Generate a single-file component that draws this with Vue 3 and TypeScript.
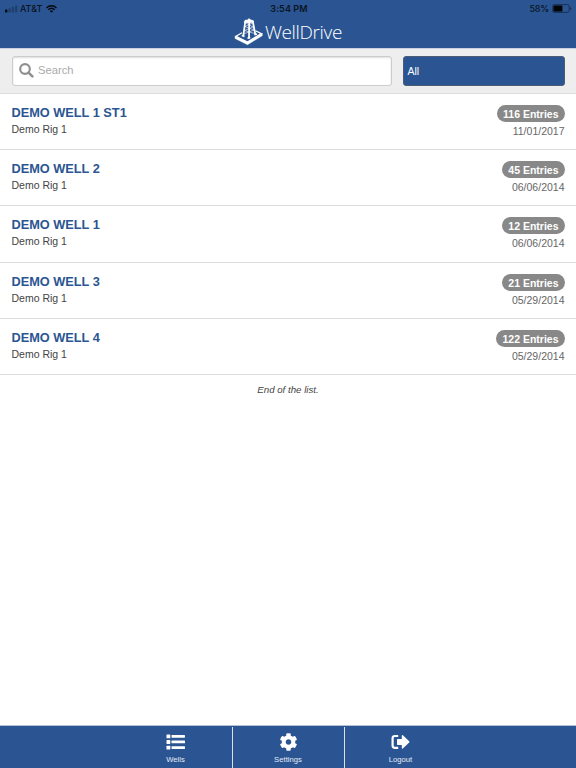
<script setup lang="ts">
import { ref } from 'vue'

interface Well {
  name: string
  rig: string
  entries: number
  date: string
}

const query = ref('')
const wells: Well[] = [
  { name: 'DEMO WELL 1 ST1', rig: 'Demo Rig 1', entries: 116, date: '11/01/2017' },
  { name: 'DEMO WELL 2', rig: 'Demo Rig 1', entries: 45, date: '06/06/2014' },
  { name: 'DEMO WELL 1', rig: 'Demo Rig 1', entries: 12, date: '06/06/2014' },
  { name: 'DEMO WELL 3', rig: 'Demo Rig 1', entries: 21, date: '05/29/2014' },
  { name: 'DEMO WELL 4', rig: 'Demo Rig 1', entries: 122, date: '05/29/2014' },
]
</script>

<template>
  <div class="app">
    <header class="header">
      <div class="status">
        <div class="carrier">
          <svg class="signal" width="13" height="8" viewBox="0 0 13 8">
            <rect x="0" y="4.4" width="2.4" height="3" rx=".6" fill="#05080f" />
            <rect x="3.4" y="3.2" width="2.3" height="4.2" rx=".6" fill="#1f3f70" />
            <rect x="6.7" y="1.8" width="2.3" height="5.6" rx=".6" fill="#1f3f70" />
            <rect x="10" y="0.4" width="2.3" height="7" rx=".6" fill="#1f3f70" />
          </svg>
          <span class="carrier-name">AT&amp;T</span>
          <svg class="wifi" width="11" height="8" viewBox="0 0 11 8" fill="none" stroke="#05080f" stroke-width="1.4">
            <path d="M.5 2.9C3.4.1 7.6.1 10.500 2.900" />
            <path d="M2.300 4.800C4.200 3 6.800 3 8.700 4.800" />
            <path d="M3.700 5.900Q5.500 4.400 7.300 5.900L5.500 7.800Z" fill="#05080f" stroke="none" />
          </svg>
        </div>
        <div class="time">3:54 PM</div>
        <div class="power">
          <span>58%</span>
          <svg width="20" height="9" viewBox="0 0 20 9">
            <rect x=".6" y=".6" width="16.600" height="7.800" rx="1.800" fill="none" stroke="#142b50" stroke-width=".9" />
            <rect x="1.500" y="1.500" width="8.900" height="6" rx=".6" fill="#020305" />
            <path d="M18.200 3v3q1.200-.5 1.200-1.500t-1.200-1.500z" fill="#142b50" />
          </svg>
        </div>
      </div>
      <div class="brand">
        <svg class="logo" width="30" height="28" viewBox="0 0 30 28" fill="none" stroke="#fff">
          <path d="M8 14.800L2 18.200L13.500 24L27.300 15.600L21.500 12.800" stroke-width="1.200" />
          <path d="M1 18L13.500 24L28.300 15.300V17.700L13.500 26.700L1 20.400Z" fill="#fff" stroke-width=".4" />
          <path d="M11.300 3L9.300 18M15.200 4L15 20.500M18.700 3L21.400 16.800" stroke-width="1.800" />
          <path d="M12 5L19 9L10.500 12.500L20.500 15.500M18.400 5L11 8.500L20 12L9.500 16" stroke-width=".6" />
          <path d="M7.800 17.500L10.500 18.500M13.500 20.200L16.300 19.600M20.500 16.800L23 16" stroke-width="1.500" />
          <path d="M10.300 3.500L11.300 1.900H13.300L15 .4L16.700 1.800L19.300 2.500L19.500 4.200L15.400 5L10.500 4.700Z" fill="#fff" stroke-width=".4" />
        </svg>
        <span class="brand-name">WellDrive</span>
      </div>
    </header>

    <div class="filters">
      <label class="search">
        <svg width="15" height="15" viewBox="0 0 14 14" fill="none" stroke="#8f8f8f">
          <circle cx="5.600" cy="5.600" r="4.500" stroke-width="2" />
          <path d="M8.900 8.900L12.500 12.500" stroke-width="2.300" stroke-linecap="round" />
        </svg>
        <input v-model="query" type="text" placeholder="Search" />
      </label>
      <button class="select" type="button">All</button>
    </div>

    <main class="content">
      <ul class="wells">
        <li v-for="well in wells" :key="well.name" class="well">
          <div class="title">
            <div class="name">{{ well.name }}</div>
            <div class="rig">{{ well.rig }}</div>
          </div>
          <div class="meta">
            <span class="badge">{{ well.entries }} Entries</span>
            <span class="date">{{ well.date }}</span>
          </div>
        </li>
      </ul>
      <p class="end">End of the list.</p>
    </main>

    <nav class="tabs">
      <a class="tab">
        <svg width="20" height="18" viewBox="0 0 20 18" fill="#fff">
          <rect x=".5" y="1.500" width="3.800" height="3.800" rx=".6" />
          <rect x=".5" y="7.100" width="3.800" height="3.800" rx=".6" />
          <rect x=".5" y="12.700" width="3.800" height="3.800" rx=".6" />
          <rect x="5.500" y="2" width="13.500" height="2.700" rx=".6" />
          <rect x="5.500" y="7.600" width="13.500" height="2.700" rx=".6" />
          <rect x="5.500" y="13.200" width="13.500" height="2.700" rx=".6" />
        </svg>
        <span>Wells</span>
      </a>
      <a class="tab">
        <svg width="19" height="18" viewBox="0 0 512 512" fill="#fff">
          <path d="M487.400 315.700l-42.600-24.600c4.300-23.200 4.300-47 0-70.200l42.600-24.600c4.900-2.800 7.100-8.600 5.500-14-11.100-35.600-30-67.800-54.700-94.600-3.800-4.100-10-5.100-14.800-2.300L380.800 110c-17.900-15.400-38.500-27.300-60.800-35.100V25.800c0-5.600-3.900-10.500-9.400-11.700-36.700-8.200-74.300-7.800-109.200 0-5.500 1.200-9.400 6.100-9.400 11.700V75c-22.200 7.900-42.800 19.800-60.800 35.100L88.700 85.500c-4.900-2.800-11-1.900-14.800 2.300-24.700 26.700-43.600 58.900-54.700 94.600-1.700 5.400.6 11.200 5.500 14L67.300 221c-4.300 23.200-4.300 47 0 70.200l-42.600 24.600c-4.900 2.800-7.100 8.600-5.500 14 11.100 35.600 30 67.800 54.700 94.600 3.800 4.100 10 5.100 14.800 2.300l42.600-24.600c17.900 15.400 38.500 27.300 60.800 35.100v49.200c0 5.600 3.900 10.500 9.400 11.700 36.700 8.200 74.300 7.800 109.200 0 5.500-1.200 9.400-6.100 9.400-11.700v-49.200c22.200-7.900 42.800-19.800 60.800-35.100l42.600 24.600c4.900 2.800 11 1.900 14.800-2.300 24.700-26.700 43.600-58.900 54.700-94.600 1.500-5.500-.7-11.300-5.600-14.100zM256 336c-44.100 0-80-35.900-80-80s35.900-80 80-80 80 35.900 80 80-35.900 80-80 80z" />
        </svg>
        <span>Settings</span>
      </a>
      <a class="tab">
        <svg width="20" height="18" viewBox="0.6 0 20 18">
          <path d="M7.800 3H4.500Q2.200 3 2.200 5.300V12.500Q2.200 14.800 4.500 14.800H7.800" fill="none" stroke="#fff" stroke-width="2.200" />
          <path d="M6.600 6.700Q6.600 6 7.300 6H11.400V2.800Q11.600 1.700 12.500 2.300L18.800 8.300Q19.300 8.900 18.800 9.500L12.500 15.600Q11.600 16.200 11.400 15.100V11.900H7.300Q6.600 11.900 6.600 11.200Z" fill="#fff" />
        </svg>
        <span>Logout</span>
      </a>
    </nav>
  </div>
</template>

<style>
body {
  margin: 0;
  background: #fff;
}
</style>

<style scoped>
.app {
  display: flex;
  flex-direction: column;
  height: 768px;
  font-family: "Liberation Sans", Arial, sans-serif;
  color: #444;
}
.header {
  box-sizing: border-box;
  height: 49px;
  background: #2b5592;
  border-bottom: 1px solid #c9cfe0;
}
.status {
  display: grid;
  grid-template-columns: 1fr auto 1fr;
  align-items: center;
  height: 16px;
  padding: 1px 5px 0 5px;
  box-sizing: border-box;
  font: 500 9px/14px Inter, sans-serif;
  color: #0a1322;
}
.carrier {
  display: flex;
  align-items: center;
}
.carrier-name {
  margin: 0 4px 0 2px;
}
.time {
  padding-left: 2px;
  font-weight: 600;
  letter-spacing: 0.1px;
}
.power {
  display: flex;
  align-items: center;
  justify-content: flex-end;
  gap: 3px;
  margin-right: -1px;
}
.power span {
  letter-spacing: -0.2px;
}
.brand {
  display: flex;
  justify-content: center;
  align-items: center;
  height: 31px;
}
.brand-name {
  font: 300 19px/30px "Open Sans", sans-serif;
  letter-spacing: -0.35px;
  color: #fff;
}
.logo {
  margin-right: 1px;
}
.filters {
  display: flex;
  gap: 11px;
  box-sizing: border-box;
  height: 45px;
  padding: 7px 11.500px 0 11.500px;
  background: #eee;
  border-bottom: 1px solid #ddd;
}
.search {
  box-sizing: border-box;
  display: flex;
  align-items: center;
  gap: 4.500px;
  width: 380px;
  height: 30px;
  padding: 0 6px 2px;
  background: #fff;
  border: 1px solid #ccc;
  border-radius: 3px;
  box-shadow: inset 0 1px 2px #ddd;
}
.search input {
  flex: 1;
  min-width: 0;
  padding: 0 0 1px;
  border: 0;
  outline: 0;
  background: transparent;
  font: 11.2px "Liberation Sans", sans-serif;
  color: #444;
}
.search input::placeholder {
  color: #aaa;
}
.select {
  flex: 1;
  height: 30px;
  padding: 0 4px;
  border: 1px solid #4d5c74;
  border-radius: 3px;
  background: #2b5592;
  color: #fff;
  font: 10.500px "Liberation Sans", sans-serif;
  text-align: left;
}
.content {
  flex: 1;
}
.wells {
  margin: 0;
  padding: 0;
  list-style: none;
}
.well {
  box-sizing: border-box;
  display: flex;
  justify-content: space-between;
  height: 56.200px;
  padding: 11px 11.500px 0 11.500px;
  border-bottom: 1px solid #ddd;
}
.title {
  margin-top: -1px;
}
.name {
  font-size: 12.750px;
  line-height: 17px;
  font-weight: 700;
  color: #2b5592;
}
.rig {
  font-size: 10.500px;
  line-height: 16px;
}
.meta {
  display: flex;
  flex-direction: column;
  align-items: flex-end;
}
.badge {
  height: 17px;
  padding: 0 6px;
  border-radius: 9px;
  background: #888;
  color: #fff;
  font-size: 10.500px;
  line-height: 18px;
  font-weight: 700;
}
.date {
  margin-top: 1px;
  font-size: 10.500px;
  line-height: 16px;
  color: #666;
}
.end {
  margin: 8px 0 0;
  font-size: 9.700px;
  line-height: 13px;
  font-style: italic;
  text-align: center;
}
.tabs {
  display: flex;
  justify-content: center;
  box-sizing: border-box;
  height: 43px;
  padding-top: 1px;
  background: #2b5592;
  border-top: 1px solid #b6bfd3;
}
.tab {
  box-sizing: border-box;
  display: flex;
  flex-direction: column;
  align-items: center;
  width: 112.500px;
  padding-top: 6px;
  color: #e4eaf4;
  font-size: 7.700px;
  line-height: 14px;
}
.tab svg {
  margin-bottom: 2px;
}
.tab + .tab {
  padding-right: 1px;
  border-left: 1px solid #dbe1ec;
}
</style>
